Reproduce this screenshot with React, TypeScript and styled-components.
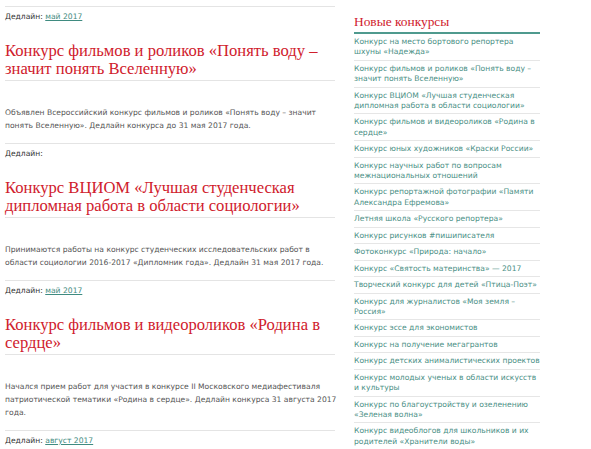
import React from "react";
import styled, { createGlobalStyle } from "styled-components";

const Global = createGlobalStyle`
  html, body { margin: 0; padding: 0; background: #fff; }
  body { font-family: "DejaVu Sans", Verdana, sans-serif; }
`;

const Page = styled.div`
  display: flex;
  align-items: flex-start;
  padding: 6px 0 0 5px;
  gap: 19px;
  width: 591px;
  height: 449px;
  overflow: hidden;
  box-sizing: border-box;
`;

const Main = styled.main`
  width: 330px;
  flex: none;
`;

const Entry = styled.article`
  border-top: 1px solid #e4e4e4;
  padding-bottom: 11px;
`;

const Deadline = styled.div`
  font-size: 7.6px;
  line-height: 13px;
  padding-top: 3px;
  color: #333;
`;

const DeadlineLink = styled.a`
  color: #3f8b80;
  text-decoration: underline;
`;

const Title = styled.h2`
  margin: 19px 0 0;
  padding-bottom: 2px;
  border-bottom: 1px solid #e4e4e4;
  font-family: "Liberation Serif", "Times New Roman", serif;
  font-weight: normal;
  font-size: 16.6px;
  line-height: 18px;
  color: #d0202c;
  white-space: nowrap;
`;

const Desc = styled.p`
  margin: 25px 0 0;
  font-size: 7.6px;
  line-height: 13px;
  color: #555;
  white-space: nowrap;
`;

const Side = styled.aside`
  width: 186px;
  flex: none;
  padding-top: 7px;
`;

const SideHeading = styled.h3`
  margin: 0;
  padding-bottom: 1px;
  border-bottom: 2px solid #4f9a8e;
  font-family: "Liberation Serif", "Times New Roman", serif;
  font-weight: normal;
  font-size: 13.4px;
  line-height: 18px;
  color: #d0202c;
`;

const SideList = styled.ul`
  list-style: none;
  margin: 0;
  padding: 0;
`;

const SideItem = styled.li`
  padding: 3px 0 2.2px;
  border-bottom: 1px solid #e6e6e6;
  font-size: 7.6px;
  line-height: 10.3px;
  white-space: nowrap;
`;

const SideLink = styled.a`
  color: #4a8f85;
  text-decoration: none;
`;

type EntryData = {
  deadline?: string;
  title: string[];
  desc: string[];
};

const entries: EntryData[] = [
  {
    deadline: "май 2017",
    title: ["Конкурс фильмов и роликов «Понять воду –", "значит понять Вселенную»"],
    desc: [
      "Объявлен Всероссийский конкурс фильмов и роликов «Понять воду – значит",
      "понять Вселенную». Дедлайн конкурса до 31 мая 2017 года.",
    ],
  },
  {
    title: ["Конкурс ВЦИОМ «Лучшая студенческая", "дипломная работа в области социологии»"],
    desc: [
      "Принимаются работы на конкурс студенческих исследовательских работ в",
      "области социологии 2016-2017 «Дипломник года». Дедлайн 31 мая 2017 года.",
    ],
  },
  {
    deadline: "май 2017",
    title: ["Конкурс фильмов и видеороликов «Родина в", "сердце»"],
    desc: [
      "Начался прием работ для участия в конкурсе II Московского медиафестиваля",
      "патриотической тематики «Родина в сердце». Дедлайн конкурса 31 августа 2017",
      "года.",
    ],
  },
];

const sideItems: string[][] = [
  ["Конкурс на место бортового репортера", "шхуны «Надежда»"],
  ["Конкурс фильмов и роликов «Понять воду –", "значит понять Вселенную»"],
  ["Конкурс ВЦИОМ «Лучшая студенческая", "дипломная работа в области социологии»"],
  ["Конкурс фильмов и видеороликов «Родина в", "сердце»"],
  ["Конкурс юных художников «Краски России»"],
  ["Конкурс научных работ по вопросам", "межнациональных отношений"],
  ["Конкурс репортажной фотографии «Памяти", "Александра Ефремова»"],
  ["Летняя школа «Русского репортера»"],
  ["Конкурс рисунков #пишиписателя"],
  ["Фотоконкурс «Природа: начало»"],
  ["Конкурс «Святость материнства» — 2017"],
  ["Творческий конкурс для детей «Птица-Поэт»"],
  ["Конкурс для журналистов «Моя земля –", "Россия»"],
  ["Конкурс эссе для экономистов"],
  ["Конкурс на получение мегагрантов"],
  ["Конкурс детских анималистических проектов"],
  ["Конкурс молодых ученых в области искусств", "и культуры"],
  ["Конкурс по благоустройству и озеленению", "«Зеленая волна»"],
  ["Конкурс видеоблогов для школьников и их", "родителей «Хранители воды»"],
];

const Lines = ({ lines }: { lines: string[] }) => (
  <>
    {lines.map((l, i) => (
      <React.Fragment key={i}>
        {i > 0 && <br />}
        {l}
      </React.Fragment>
    ))}
  </>
);

export default function App() {
  return (
    <>
      <Global />
      <Page>
        <Main>
          {entries.map((e, i) => (
            <Entry key={i}>
              <Deadline>
                Дедлайн: {e.deadline && <DeadlineLink href="#">{e.deadline}</DeadlineLink>}
              </Deadline>
              <Title>
                <Lines lines={e.title} />
              </Title>
              <Desc>
                <Lines lines={e.desc} />
              </Desc>
            </Entry>
          ))}
          <Entry>
            <Deadline>
              Дедлайн: <DeadlineLink href="#">август 2017</DeadlineLink>
            </Deadline>
          </Entry>
        </Main>
        <Side>
          <SideHeading>Новые конкурсы</SideHeading>
          <SideList>
            {sideItems.map((s, i) => (
              <SideItem key={i}>
                <SideLink href="#">
                  <Lines lines={s} />
                </SideLink>
              </SideItem>
            ))}
          </SideList>
        </Side>
      </Page>
    </>
  );
}
